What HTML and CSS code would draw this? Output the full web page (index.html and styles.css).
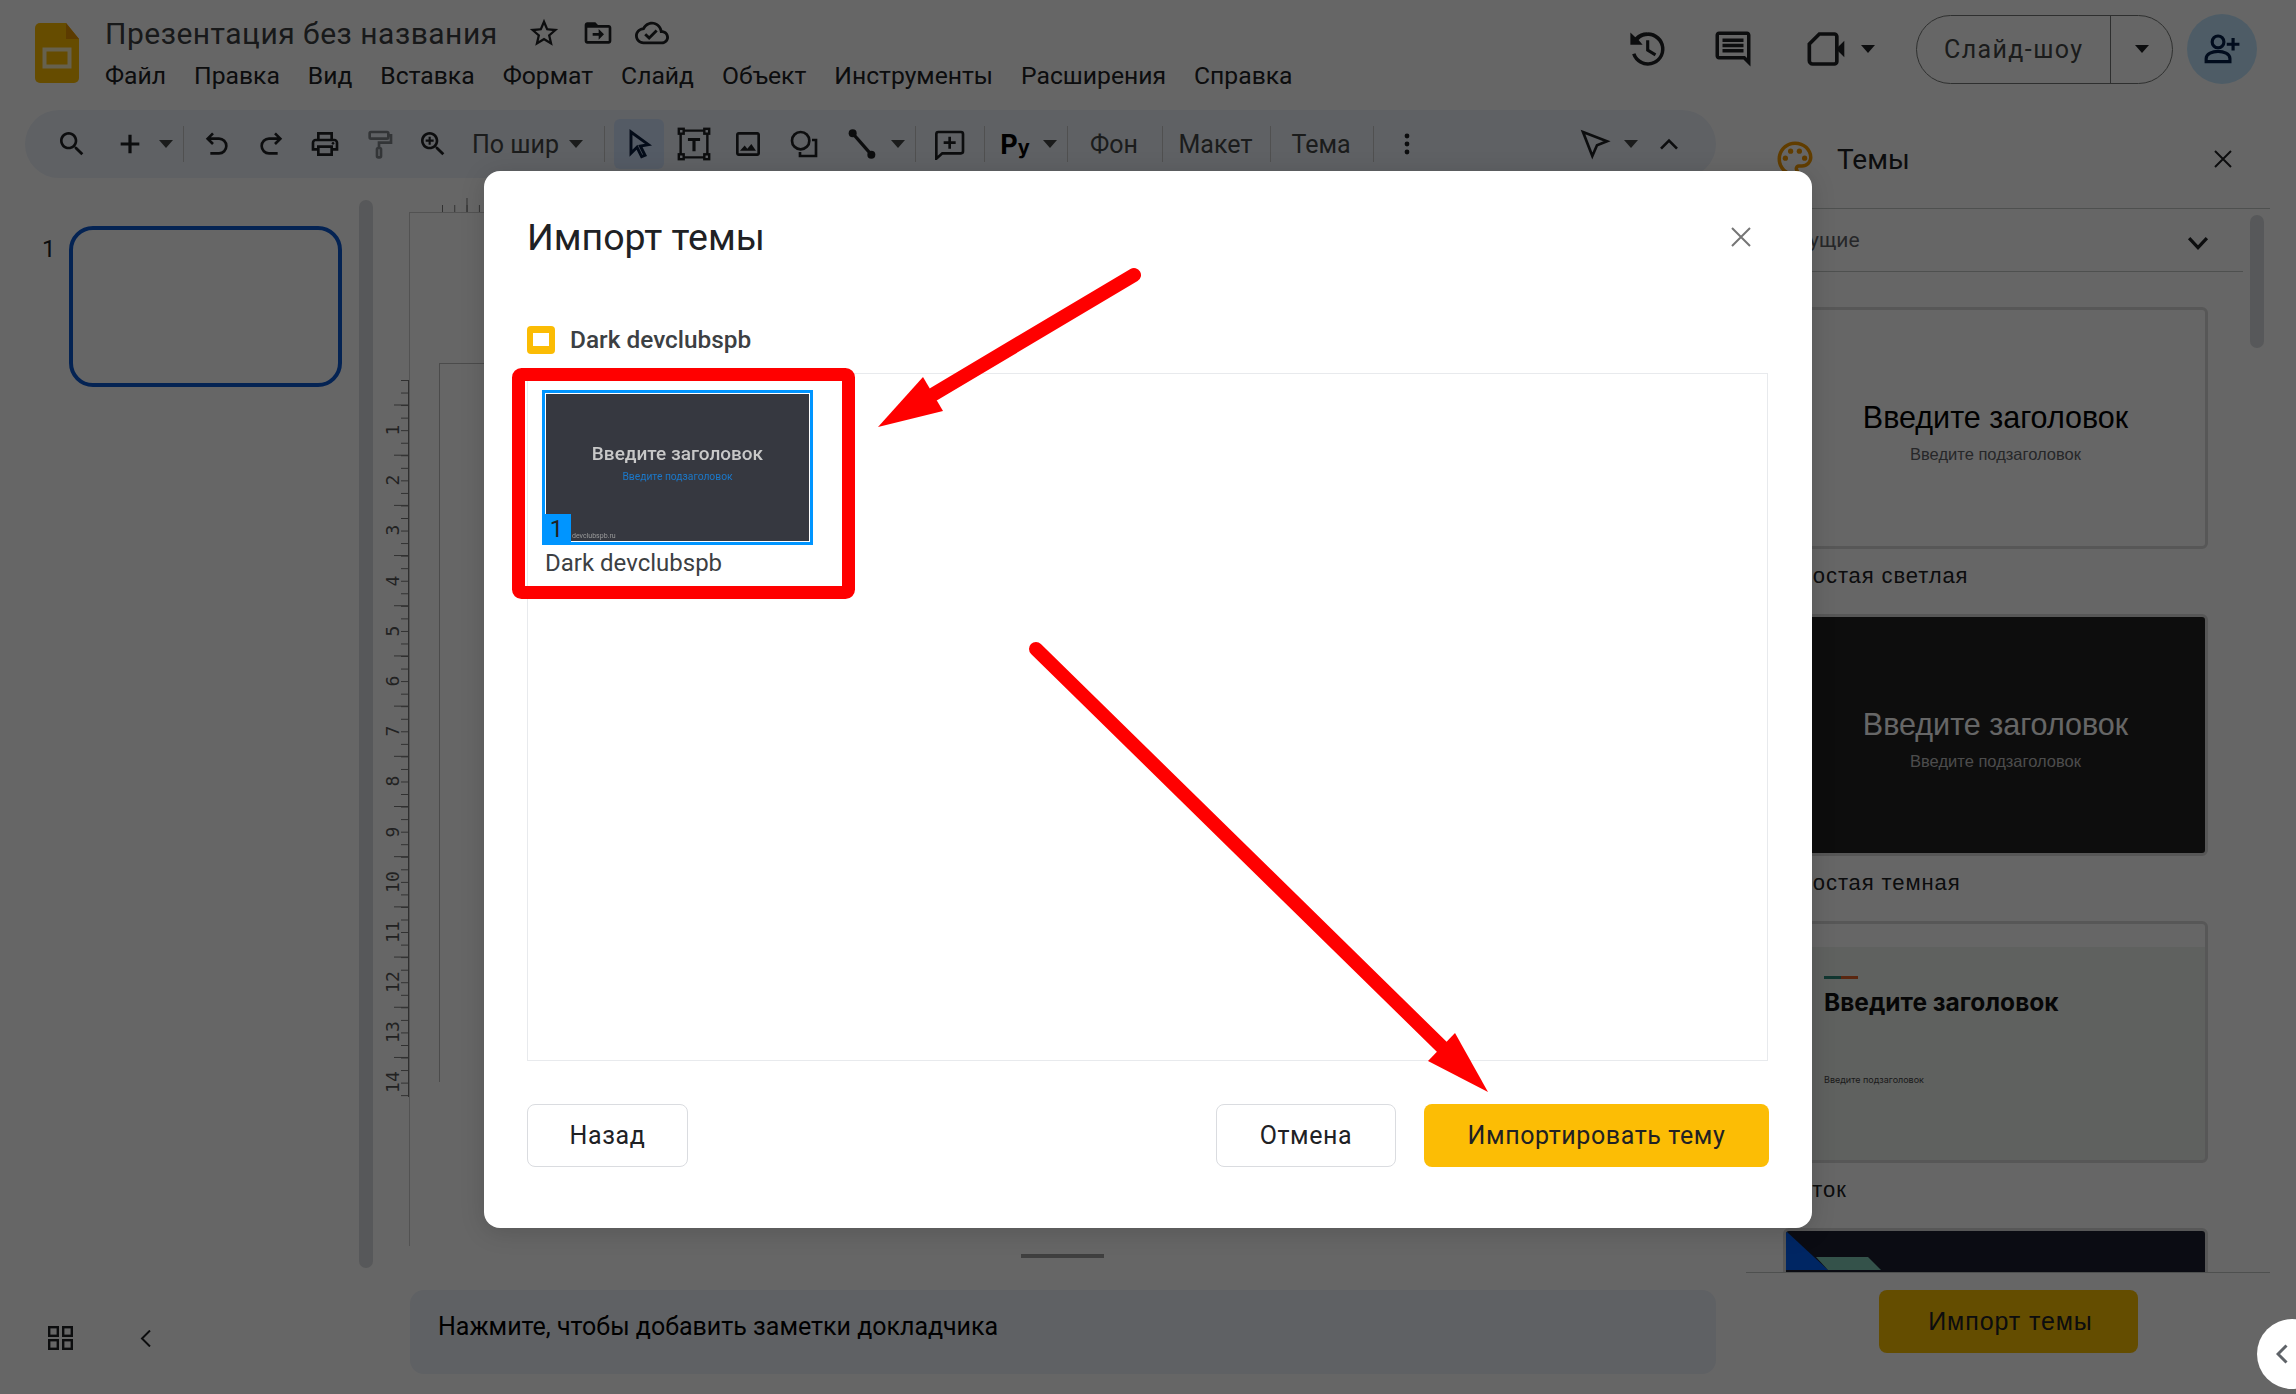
FILE: index.html
```html
<!DOCTYPE html>
<html lang="ru">
<head>
    <meta charset="UTF-8">
    <title>Презентация без названия</title>
    <link rel="stylesheet" href="styles.css">
</head>
<body>
<div class="app">
    <header class="topbar">
        <svg class="logo" viewBox="0 0 44 60">
            <path d="M5 0h26l13 16v39a5 5 0 0 1-5 5H5a5 5 0 0 1-5-5V5a5 5 0 0 1 5-5z" fill="#ffbd00"/>
            <path d="M31 0l13 16H31z" fill="#e69500"/>
            <rect x="9.5" y="26.5" width="25" height="17" fill="none" stroke="#fff3c4" stroke-width="4"/>
        </svg>
        <div class="doc-info">
            <div class="doc-title-row">
                <span class="doc-title">Презентация без названия</span>
                <svg class="ico title-star" viewBox="0 0 24 24"><path d="M22 9.24l-7.19-.62L12 2 9.19 8.63 2 9.24l5.46 4.73L5.82 21 12 17.27 18.18 21l-1.63-7.03L22 9.24zM12 15.4l-3.76 2.27 1-4.28-3.32-2.88 4.38-.38L12 6.1l1.71 4.04 4.38.38-3.32 2.88 1 4.28L12 15.4z"/></svg>
                <svg class="ico title-move" viewBox="0 0 24 24"><path d="M20 6h-8l-2-2H4c-1.1 0-2 .9-2 2v12c0 1.1.9 2 2 2h16c1.1 0 2-.9 2-2V8c0-1.1-.9-2-2-2zm0 12H4V8h16v10z"/><path d="M12.5 17l4-4-4-4v3H8v2h4.500z"/></svg>
                <svg class="ico title-cloud" viewBox="0 0 24 24"><path d="M19.350 10.040C18.670 6.590 15.640 4 12 4 9.110 4 6.600 5.640 5.350 8.040 2.340 8.360 0 10.910 0 14c0 3.310 2.690 6 6 6h13c2.760 0 5-2.240 5-5 0-2.640-2.050-4.780-4.650-4.960zM19 18H6c-2.210 0-4-1.790-4-4 0-2.050 1.530-3.760 3.560-3.970l1.070-.11.5-.95C8.080 7.140 9.940 6 12 6c2.620 0 4.880 1.860 5.390 4.430l.3 1.500 1.530.11c1.560.1 2.780 1.410 2.780 2.960 0 1.650-1.350 3-3 3zm-9-3.820l-2.090-2.090L6.500 13.500 10 17l6.010-6.010-1.410-1.410z"/></svg>
            </div>
            <nav class="menu">
                <span>Файл</span><span>Правка</span><span>Вид</span><span>Вставка</span><span>Формат</span><span>Слайд</span><span>Объект</span><span>Инструменты</span><span>Расширения</span><span>Справка</span>
            </nav>
        </div>
        <div class="top-actions">
            <svg class="ico top-ico" viewBox="0 0 24 24"><path d="M12.500 2.500a9.500 9.500 0 1 1-9 12.500l1.900-.6a7.500 7.500 0 1 0 1.800-7.600L9.500 9.500H2.500v-7l2.800 2.800a9.500 9.500 0 0 1 7.200-2.800z"/><path d="M11.500 7h1.800v5.200l4 2.400-.9 1.500-4.900-3z"/></svg>
            <svg class="ico top-ico comment-ico" viewBox="0 0 24 24"><path d="M21.990 4c0-1.100-.89-2-1.990-2H4c-1.100 0-2 .9-2 2v12c0 1.100.9 2 2 2h14l4 4-.01-18zM20 4v13.170L18.830 16H4V4h16zM6 12h12v2H6zm0-3h12v2H6zm0-3h12v2H6z"/></svg>
            <svg class="ico top-ico video-ico" viewBox="0 0 24 24"><path d="M2 9l6-6h9a1.500 1.500 0 0 1 1.500 1.500v15a1.500 1.500 0 0 1-1.500 1.500H4a2 2 0 0 1-2-2z" fill="none" stroke="#202124" stroke-width="2.200"/><path d="M18 12l5-5v10z"/></svg>
            <i class="caret video-caret"></i>
            <div class="show-pill">
                <span class="show-label">Слайд-шоу</span>
                <span class="show-drop"><i class="caret"></i></span>
            </div>
            <div class="share-btn">
                <svg class="ico" viewBox="0 0 24 24"><circle cx="9.500" cy="7.500" r="3.700" fill="none" stroke="#041e49" stroke-width="2"/><path d="M2 20v-2c0-3 4-4.500 7.500-4.500S17 15 17 18v2z" fill="none" stroke="#041e49" stroke-width="2"/><path d="M18 5v3h-3v2h3v3h2v-3h3V8h-3V5z" fill="#041e49"/></svg>
            </div>
        </div>
    </header>

    <div class="body-row">
        <div class="work">
            <div class="toolbar">
                <span class="tb-btn"><svg class="ico" viewBox="0 0 24 24"><path d="M15.500 14h-.79l-.28-.27C15.410 12.590 16 11.110 16 9.500 16 5.910 13.090 3 9.500 3S3 5.910 3 9.500 5.910 16 9.500 16c1.610 0 3.090-.59 4.230-1.570l.27.28v.79l5 4.990L20.490 19l-4.990-5zm-6 0C7.010 14 5 11.990 5 9.500S7.010 5 9.500 5 14 7.010 14 9.500 11.990 14 9.500 14z"/></svg></span>
                <span class="tb-btn plus-btn"><svg class="ico" viewBox="0 0 24 24"><path d="M19 13.200h-5.800V19h-2.400v-5.800H5v-2.400h5.800V5h2.400v5.800H19z"/></svg></span>
                <span class="tb-caret"><i class="caret small"></i></span>
                <i class="tb-sep"></i>
                <span class="tb-btn"><svg class="ico line-ico" viewBox="0 0 24 24"><path d="M9 4 5 8l4 4M5 8h8.500a5.500 5.500 0 0 1 0 11H7"/></svg></span>
                <span class="tb-btn"><svg class="ico line-ico" viewBox="0 0 24 24"><path d="M15 4l4 4-4 4M19 8h-8.500a5.500 5.500 0 0 0 0 11H17"/></svg></span>
                <span class="tb-btn"><svg class="ico" viewBox="0 0 24 24"><path d="M19 8h-1V3H6v5H5c-1.660 0-3 1.340-3 3v6h4v4h12v-4h4v-6c0-1.660-1.340-3-3-3zM8 5h8v3H8V5zm8 12v2H8v-4h8v2zm2-2v-2H6v2H4v-4c0-.55.45-1 1-1h14c.55 0 1 .45 1 1v4h-2z"/><circle cx="18" cy="11.500" r="1"/></svg></span>
                <span class="tb-btn"><svg class="ico line-ico paint-ico" viewBox="0 0 24 24"><rect x="5" y="3" width="14" height="5" rx="1"/><path d="M19 5.500h2v5.500h-9v4"/><rect x="10.500" y="15" width="3" height="7" rx="1"/></svg></span>
                <span class="tb-btn"><svg class="ico" viewBox="0 0 24 24"><path d="M15.500 14h-.79l-.28-.27C15.410 12.590 16 11.110 16 9.500 16 5.910 13.090 3 9.500 3S3 5.910 3 9.500 5.910 16 9.500 16c1.610 0 3.090-.59 4.230-1.570l.27.28v.79l5 4.990L20.490 19l-4.990-5zm-6 0C7.010 14 5 11.990 5 9.500S7.010 5 9.500 5 14 7.010 14 9.500 11.990 14 9.500 14z"/><path d="M12.500 10.300h-2.200v2.200H8.700v-2.200H6.500V8.700h2.200V6.500h1.600v2.200h2.200z"/></svg></span>
                <span class="tb-zoom">По шир<i class="caret small"></i></span>
                <i class="tb-sep"></i>
                <span class="tb-btn tb-active"><svg class="ico" viewBox="0 0 24 24"><path d="M6 3l13 9.500-6 1 3.500 7-2.500 1-3.500-7L6 19z" fill="none" stroke="#0b1f3f" stroke-width="2.200"/></svg></span>
                <span class="tb-btn"><svg class="ico textbox-ico" viewBox="0 0 28 28"><path d="M5 3h18M5 25h18M3 5v18M25 5v18" fill="none" stroke="#202124" stroke-width="2"/><g fill="none" stroke="#202124" stroke-width="2"><rect x="1.500" y="1.500" width="4" height="4"/><rect x="22.500" y="1.500" width="4" height="4"/><rect x="1.500" y="22.500" width="4" height="4"/><rect x="22.500" y="22.500" width="4" height="4"/></g><path d="M9 9h10v2.500h-3.700V20h-2.600v-8.500H9z"/></svg></span>
                <span class="tb-btn"><svg class="ico" viewBox="0 0 24 24"><path d="M19 5v14H5V5h14m0-2H5c-1.100 0-2 .9-2 2v14c0 1.100.9 2 2 2h14c1.100 0 2-.9 2-2V5c0-1.100-.9-2-2-2zm-4.500 9l-3 3.500-2-2.300L6 17h12z"/></svg></span>
                <span class="tb-btn shape-btn"><svg class="ico line-ico" viewBox="0 0 24 24"><circle cx="9.500" cy="9.500" r="6.500"/><path d="M18 9h3v12H9v-3"/></svg></span>
                <span class="tb-btn line-btn"><svg class="ico" viewBox="0 0 24 24"><path d="M4.500 3.500l15 17" stroke="#202124" stroke-width="2.400"/><circle cx="5" cy="4" r="3"/><circle cx="19" cy="20" r="3"/></svg></span>
                <span class="tb-caret"><i class="caret small"></i></span>
                <i class="tb-sep"></i>
                <span class="tb-btn"><svg class="ico" viewBox="0 0 24 24"><path d="M4 3h17a1.500 1.500 0 0 1 1.500 1.500v13a1.500 1.500 0 0 1-1.500 1.500H7l-4.500 4V4.500A1.500 1.500 0 0 1 4 3z" fill="none" stroke="#202124" stroke-width="2"/><path d="M11.500 6.500h2v3.500H17v2h-3.500v3.500h-2V12H8v-2h3.500z"/></svg></span>
                <i class="tb-sep"></i>
                <span class="tb-font"><b>P</b><b class="font-y">y</b></span>
                <span class="tb-caret font-caret"><i class="caret small"></i></span>
                <i class="tb-sep"></i>
                <span class="tb-text bg-btn">Фон</span>
                <i class="tb-sep"></i>
                <span class="tb-text layout-btn">Макет</span>
                <i class="tb-sep"></i>
                <span class="tb-text theme-btn">Тема</span>
                <i class="tb-sep"></i>
                <span class="tb-btn dots-btn"><svg class="ico" viewBox="0 0 24 24"><circle cx="12" cy="6" r="1.800"/><circle cx="12" cy="12" r="1.800"/><circle cx="12" cy="18" r="1.800"/></svg></span>
                <span class="tb-btn tb-push"><svg class="ico line-ico" viewBox="0 0 24 24"><path d="M3 3l18 7-7.500 3L10 21z"/></svg></span>
                <span class="tb-caret"><i class="caret small"></i></span>
                <span class="tb-btn chevron-btn"><svg class="ico line-ico" viewBox="0 0 24 24"><path d="M6 15.500l6-6 6 6"/></svg></span>
            </div>

            <div class="workspace">
                <aside class="filmstrip">
                    <div class="strip-top">
                        <div class="strip-list">
                            <span class="slide-num">1</span>
                            <div class="slide-thumb"></div>
                        </div>
                        <div class="strip-scroll"></div>
                    </div>
                    <div class="strip-foot">
                        <svg class="grid-ico" viewBox="0 0 25 24"><g fill="none" stroke="#202124" stroke-width="2.400"><rect x="1.200" y="1.200" width="8.600" height="8.600"/><rect x="15.200" y="1.200" width="8.600" height="8.600"/><rect x="1.200" y="14.200" width="8.600" height="8.600"/><rect x="15.200" y="14.200" width="8.600" height="8.600"/></g></svg>
                        <svg class="back-ico" viewBox="0 0 11 17"><path d="M10 .5 2 8.500l8 8" fill="none" stroke="#202124" stroke-width="2"/></svg>
                    </div>
                </aside>
                <div class="ruler-v">
                    <div class="ruler-nums">
                        <span>1</span><span>2</span><span>3</span><span>4</span><span>5</span><span>6</span><span>7</span><span>8</span><span>9</span><span>10</span><span>11</span><span>12</span><span>13</span><span>14</span>
                    </div>
                </div>
                <div class="canvas-col">
                    <div class="ruler-h"></div>
                    <div class="stage">
                        <div class="slide-frame"></div>
                    </div>
                    <div class="notes-handle"></div>
                    <div class="notes">Нажмите, чтобы добавить заметки докладчика</div>
                </div>
            </div>
        </div>

        <aside class="side">
            <div class="side-head">
                <svg class="palette" viewBox="0 0 24 24"><path d="M12 22C6.490 22 2 17.510 2 12S6.490 2 12 2s10 4.040 10 9c0 3.310-2.690 6-6 6h-1.770c-.28 0-.5.22-.5.5 0 .12.05.23.13.33.41.47.64 1.060.64 1.670 0 1.380-1.120 2.500-2.500 2.500zm0-18c-4.410 0-8 3.590-8 8s3.590 8 8 8c.28 0 .5-.22.5-.5 0-.16-.08-.28-.14-.35-.41-.46-.63-1.050-.63-1.650 0-1.380 1.120-2.500 2.500-2.500H16c2.210 0 4-1.790 4-4 0-3.860-3.590-7-8-7z"/><circle cx="6.500" cy="11.500" r="1.500"/><circle cx="9.500" cy="7.500" r="1.500"/><circle cx="14.500" cy="7.500" r="1.500"/><circle cx="17.500" cy="11.500" r="1.500"/></svg>
                <span class="side-title">Темы</span>
                <svg class="side-close" viewBox="0 0 18 18"><path d="M1 1l16 16M17 1 1 17" fill="none" stroke="#202124" stroke-width="2"/></svg>
            </div>
            <div class="theme-select">
                <span>Текущие</span>
                <svg class="select-chev" viewBox="0 0 16 11"><path d="M1.500 1.500 8 8.500l6.500-7" fill="none" stroke="#202124" stroke-width="2.400"/></svg>
            </div>
            <div class="side-scroll"></div>
            <div class="theme-list">
                <div class="theme-card">
                    <strong class="card-title">Введите заголовок</strong>
                    <span class="card-sub">Введите подзаголовок</span>
                </div>
                <div class="theme-name">Простая светлая</div>
                <div class="theme-card card-dark">
                    <strong class="card-title">Введите заголовок</strong>
                    <span class="card-sub">Введите подзаголовок</span>
                </div>
                <div class="theme-name">Простая темная</div>
                <div class="theme-card card-flow">
                    <i class="flow-bar"></i>
                    <strong class="card-title">Введите заголовок</strong>
                    <span class="card-sub">Введите подзаголовок</span>
                </div>
                <div class="theme-name">Поток</div>
                <div class="theme-card card-navy">
                    <svg class="navy-art" viewBox="0 0 120 39"><path d="M0 0 42 39H0z" fill="#0060f8"/><path d="M30 26h52l13 13H42z" fill="#82cdb9"/></svg>
                </div>
            </div>
            <div class="side-foot"><span class="side-import">Импорт темы</span></div>
        </aside>
    </div>

    <div class="scrim"></div>

    <section class="dialog">
        <div class="dialog-head">
            <h2>Импорт темы</h2>
            <svg class="dialog-close" viewBox="0 0 20 20"><path d="M1 1l18 18M19 1 1 19" fill="none" stroke="#757575" stroke-width="2"/></svg>
        </div>
        <div class="file-row">
            <svg class="file-ico" viewBox="0 0 28 28"><rect width="28" height="28" rx="4" fill="#fbbc04"/><rect x="6" y="7" width="16" height="13" fill="#fff"/></svg>
            <span>Dark devclubspb</span>
        </div>
        <div class="import-list">
            <div class="import-item">
                <div class="import-thumb">
                    <div class="thumb-slide">
                        <span class="thumb-title">Введите заголовок</span>
                        <span class="thumb-sub">Введите подзаголовок</span>
                        <span class="thumb-foot">devclubspb.ru</span>
                    </div>
                    <span class="thumb-badge">1</span>
                </div>
                <div class="import-name">Dark devclubspb</div>
            </div>
        </div>
        <div class="dialog-actions">
            <button class="btn">Назад</button>
            <button class="btn btn-cancel">Отмена</button>
            <button class="btn btn-yellow">Импортировать тему</button>
        </div>
    </section>

    <div class="float-toggle">
        <svg viewBox="0 0 12 20"><path d="M10.500 1.500 2 10l8.500 8.500" fill="none" stroke="#5f6368" stroke-width="3"/></svg>
    </div>

    <svg class="marks" viewBox="0 0 2296 1394">
        <rect x="518.500" y="374.500" width="330" height="218" rx="3" fill="none" stroke="#ff0000" stroke-width="13"/>
        <path d="M1134 275 934 394" stroke="#ff0000" stroke-width="14" stroke-linecap="round"/>
        <path d="M878 427 923 377 943 411z" fill="#ff0000"/>
        <path d="M1036 649 1443 1048" stroke="#ff0000" stroke-width="14" stroke-linecap="round"/>
        <path d="M1488 1092 1455 1033 1428 1061z" fill="#ff0000"/>
    </svg>
</div>
</body>
</html>
```

FILE: styles.css
```css
* {
    box-sizing: border-box;
}
html, body {
    margin: 0;
    padding: 0;
}
body {
    font-family: Roboto, "Liberation Sans", sans-serif;
    color: #202124;
    background: #fff;
}
.app {
    position: relative;
    width: 2296px;
    height: 1394px;
    overflow: hidden;
    background: #fff;
}
.ico {
    display: block;
    width: 32px;
    height: 32px;
    fill: #202124;
}
.line-ico {
    fill: none;
    stroke: #202124;
    stroke-width: 2;
}

/* top bar */
.topbar {
    display: flex;
    height: 110px;
}
.logo {
    width: 44px;
    height: 60px;
    margin: 23px 26px 0 35px;
    flex: none;
}
.doc-info {
    padding-top: 15px;
}
.doc-title-row {
    display: flex;
    align-items: center;
    height: 36px;
}
.doc-title {
    font-size: 30px;
    letter-spacing: .5px;
    color: #3c4043;
    width: 422px;
    white-space: nowrap;
}
.title-star {
    width: 34px;
    height: 34px;
}
.title-move {
    width: 32px;
    height: 32px;
    margin-left: 21px;
}
.title-cloud {
    width: 34px;
    height: 34px;
    margin-left: 21px;
}
.menu {
    display: flex;
    gap: 28px;
    margin-top: 10px;
    font-size: 24.700px;
    line-height: 30px;
    color: #202124;
}
.top-actions {
    display: flex;
    align-items: center;
    margin-left: auto;
    padding: 14px 39px 0 0;
    height: 84px;
}
.top-ico {
    width: 42px;
    height: 42px;
    margin-right: 44px;
}
.comment-ico {
    margin-right: 52px;
}
.video-ico {
    width: 40px;
    height: 40px;
    margin-right: 15px;
}
.caret {
    display: block;
    width: 0;
    height: 0;
    border: 7px solid transparent;
    border-top: 8px solid #202124;
    border-bottom: 0;
}
.caret.small {
    border-top-color: #444746;
}
.video-caret {
    margin-right: 41px;
}
.show-pill {
    display: flex;
    width: 257px;
    height: 69px;
    margin-right: 14px;
    border: 1px solid #747775;
    border-radius: 35px;
}
.show-label {
    width: 193px;
    padding-left: 27px;
    font-size: 25px;
    line-height: 67px;
    letter-spacing: 1.400px;
    color: #444746;
}
.show-drop {
    flex: 1;
    display: flex;
    align-items: center;
    justify-content: center;
    border-left: 1px solid #747775;
}
.share-btn {
    display: flex;
    align-items: center;
    justify-content: center;
    width: 70px;
    height: 70px;
    border-radius: 50%;
    background: #c2e7ff;
}
.share-btn .ico {
    width: 38px;
    height: 38px;
}

/* main area */
.body-row {
    display: flex;
    height: 1284px;
}
.work {
    width: 1716px;
    display: flex;
    flex-direction: column;
}
.toolbar {
    display: flex;
    align-items: center;
    height: 68px;
    margin-left: 25px;
    padding: 0 20px;
    background: #edf2fa;
    border-radius: 34px;
}
.tb-btn {
    display: flex;
    align-items: center;
    justify-content: center;
    width: 54px;
    height: 50px;
    flex: none;
}
.plus-btn {
    margin-left: 4px;
}
.tb-caret {
    display: flex;
    justify-content: center;
    width: 18px;
    flex: none;
}
.tb-sep {
    width: 1px;
    height: 36px;
    margin: 0 6px 0 8px;
    background: #c7c7c7;
    flex: none;
}
.paint-ico {
    stroke: #80868b;
}
.tb-zoom {
    display: flex;
    align-items: center;
    gap: 10px;
    width: 136px;
    padding-left: 12px;
    font-size: 25px;
    color: #444746;
    white-space: nowrap;
}
.tb-active {
    width: 50px;
    margin: 0 3px;
    background: #d3e3fd;
    border-radius: 6px;
}
.textbox-ico {
    width: 34px;
    height: 34px;
}
.shape-btn {
    margin: 0 2px;
}
.line-btn {
    margin-left: 2px;
}
.tb-font {
    width: 48px;
    text-align: center;
    font-family: "Inter", sans-serif;
    font-size: 27px;
    color: #000;
}
.font-y {
    font-size: 20px;
}
.font-caret {
    margin-left: 2px;
}
.tb-text {
    text-align: center;
    font-size: 25px;
    color: #444746;
}
.bg-btn {
    width: 80px;
}
.layout-btn {
    width: 93px;
}
.theme-btn {
    width: 88px;
}
.tb-push {
    margin-left: auto;
}
.chevron-btn {
    margin-left: 2px;
}

.workspace {
    flex: 1;
    display: flex;
    min-height: 0;
}
.filmstrip {
    width: 373px;
    flex: none;
}
.strip-top {
    display: flex;
    height: 1090px;
}
.strip-list {
    width: 359px;
    display: flex;
    padding: 48px 0 0 42px;
}
.slide-num {
    width: 27px;
    font-size: 24px;
    line-height: 26px;
    margin-top: 10px;
    color: #202124;
}
.slide-thumb {
    width: 273px;
    height: 161px;
    border: 4px solid #0b57d0;
    border-radius: 24px;
    background: #fff;
}
.strip-scroll {
    width: 14px;
    margin-top: 22px;
    border-radius: 7px;
    background: #dadce0;
}
.strip-foot {
    display: flex;
    padding: 58px 0 0 48px;
}
.grid-ico {
    width: 25px;
    height: 24px;
}
.back-ico {
    width: 11px;
    height: 17px;
    margin: 4px 0 0 67px;
}
.ruler-v {
    width: 36px;
    height: 919px;
    padding-top: 202px;
    flex: none;
}
.ruler-nums {
    display: flex;
    flex-direction: column;
    height: 717px;
    padding-top: 25px;
    border-right: 1px solid #777;
    background:
        linear-gradient(#777 0 1px, transparent 1px) right 0 top 0 / 7px 12.550px repeat-y,
        linear-gradient(#777 0 1px, transparent 1px) right 0 top 24.500px / 14px 50.200px repeat-y;
}
.ruler-nums span {
    display: flex;
    align-items: center;
    justify-content: center;
    flex: none;
    width: 30px;
    height: 50.200px;
    margin-left: 4px;
    font-family: "DejaVu Sans Mono", monospace;
    font-size: 18px;
    color: #555;
    transform: rotate(-90deg);
}
.canvas-col {
    flex: 1;
    min-width: 0;
}
.ruler-h {
    height: 34px;
    margin-left: 33px;
    background:
        linear-gradient(90deg, #777 0 1px, transparent 1px) 0 bottom / 12.300px 7px repeat-x,
        linear-gradient(90deg, #777 0 1px, transparent 1px) 24.500px bottom / 49.200px 14px repeat-x;
}
.stage {
    height: 1034px;
    border-top: 1px solid #ccc;
    border-left: 1px solid #ccc;
    padding: 150px 0 0 29px;
}
.slide-frame {
    height: 719px;
    border: 1px solid #bbb;
    border-bottom: 0;
}
.notes-handle {
    width: 83px;
    height: 4px;
    margin: 8px auto 0;
    background: #9e9e9e;
}
.notes {
    height: 84px;
    margin: 32px 0 0 1px;
    padding: 22px 28px;
    font-size: 25px;
    line-height: 30px;
    background: #edf2fa;
    border-radius: 14px;
    color: #000;
}

/* themes side panel */
.side {
    position: relative;
    display: flex;
    flex-direction: column;
    width: 524px;
    margin-left: 30px;
    border-radius: 30px 30px 0 0;
}
.side-head {
    display: flex;
    align-items: center;
    height: 99px;
    padding: 0 38px 0 28px;
    border-bottom: 1px solid #c4c7c5;
}
.palette {
    width: 42px;
    height: 42px;
    fill: #f29900;
}
.side-title {
    margin-left: 21px;
    font-size: 28px;
    color: #202124;
}
.side-close {
    width: 18px;
    height: 18px;
    margin-left: auto;
}
.theme-select {
    display: flex;
    align-items: center;
    justify-content: space-between;
    height: 63px;
    width: 497px;
    padding: 0 34px 0 29px;
    border-bottom: 1px solid #c4c7c5;
    font-size: 21px;
    color: #5f6368;
}
.select-chev {
    width: 22px;
    height: 15px;
    margin-top: 6px;
}
.side-scroll {
    position: absolute;
    left: 504px;
    top: 105px;
    width: 14px;
    height: 133px;
    border-radius: 7px;
    background: #dadce0;
}
.theme-list {
    flex: 1;
    min-height: 0;
    overflow: hidden;
    padding: 35px 0 0 37px;
}
.theme-card {
    display: flex;
    flex-direction: column;
    align-items: center;
    width: 425px;
    height: 242px;
    padding-top: 90px;
    border: 3px solid #d9d9d9;
    border-radius: 6px;
    background: #fff;
    font-family: "Liberation Sans", sans-serif;
}
.card-title {
    font-size: 30.500px;
    font-weight: 400;
    line-height: 34px;
    color: #000;
}
.card-sub {
    margin-top: 10px;
    font-size: 16.500px;
    line-height: 20px;
    color: #5f6368;
}
.card-dark {
    background: #212121;
}
.card-dark .card-title {
    color: #fff;
}
.card-dark .card-sub {
    color: #bdbdbd;
}
.theme-name {
    height: 65px;
    padding-top: 14px;
    font-family: "Liberation Sans", sans-serif;
    font-size: 22px;
    line-height: 26px;
    letter-spacing: .9px;
    color: #202124;
}
.card-flow {
    align-items: flex-start;
    padding: 52px 0 0 38px;
    background: linear-gradient(#fff 0 23px, #eef2ee 23px);
    font-family: Inter, sans-serif;
}
.flow-bar {
    width: 34px;
    height: 3px;
    background: linear-gradient(90deg, #2e8b7a 50%, #e0622a 50%);
}
.card-flow .card-title {
    margin-top: 6px;
    font-size: 24.500px;
    font-weight: 700;
    color: #111;
}
.card-flow .card-sub {
    margin-top: 51px;
    font-size: 9px;
    color: #444;
}
.card-navy {
    padding: 0;
    background: #1c2030;
    overflow: hidden;
}
.navy-art {
    display: block;
    align-self: flex-start;
    width: 120px;
    height: 39px;
}
.side-foot {
    position: relative;
    display: flex;
    justify-content: center;
    height: 122px;
    padding-top: 17px;
    border-top: 1px solid #c4c7c5;
    background: #fff;
}
.side-import {
    width: 259px;
    height: 63px;
    padding-left: 5px;
    border-radius: 8px;
    background: #fbc002;
    font-family: "Liberation Sans", sans-serif;
    font-size: 25px;
    line-height: 63px;
    letter-spacing: .9px;
    text-align: center;
    color: #202124;
}

/* modal */
.scrim {
    position: absolute;
    inset: 0;
    background: rgba(0, 0, 0, .6);
}
.dialog {
    position: absolute;
    left: 484px;
    top: 171px;
    width: 1328px;
    height: 1057px;
    padding: 46px 43px 0;
    background: #fff;
    border-radius: 16px;
    box-shadow: 0 4px 24px rgba(0, 0, 0, .15);
}
.dialog-head {
    display: flex;
    align-items: center;
    justify-content: space-between;
    height: 40px;
}
.dialog-head h2 {
    margin: 0;
    font-size: 37.500px;
    font-weight: 400;
    color: #202124;
}
.dialog-close {
    width: 20px;
    height: 20px;
    margin-right: 18px;
}
.file-row {
    display: flex;
    align-items: center;
    gap: 15px;
    height: 28px;
    margin-top: 69px;
    font-size: 24.400px;
    font-weight: 500;
    color: #3c4043;
}
.file-row span {
    margin-top: -2px;
}
.file-ico {
    width: 28px;
    height: 28px;
}
.import-list {
    width: 1241px;
    height: 688px;
    margin-top: 19px;
    padding: 16px 14px;
    border: 1px solid #e8eaed;
}
.import-item {
    width: 271px;
}
.import-thumb {
    position: relative;
    height: 155px;
    padding: 1px;
    border: 3px solid #0095ff;
    background: #fff;
}
.thumb-slide {
    display: flex;
    flex-direction: column;
    align-items: center;
    position: relative;
    height: 100%;
    padding-top: 48px;
    background: #363840;
}
.thumb-title {
    font-size: 19px;
    font-weight: 500;
    line-height: 24px;
    color: #c8c8c8;
    filter: blur(.6px);
}
.thumb-sub {
    margin-top: 4px;
    font-size: 10.300px;
    line-height: 14px;
    color: #1b78c9;
    filter: blur(.6px);
}
.thumb-foot {
    position: absolute;
    left: 26px;
    bottom: 1px;
    font-size: 7px;
    color: #9a9a9a;
    filter: blur(.3px);
}
.thumb-badge {
    position: absolute;
    left: -3px;
    bottom: -2px;
    width: 29px;
    height: 30px;
    background: #0095ff;
    font-size: 24px;
    line-height: 30px;
    text-align: center;
    color: #202124;
}
.import-name {
    margin: 2px 0 0 3px;
    font-size: 24px;
    line-height: 32px;
    color: #3c4043;
}
.dialog-actions {
    display: flex;
    width: 1242px;
    margin-top: 43px;
}
.btn {
    width: 161px;
    height: 63px;
    border: 1px solid #dadce0;
    border-radius: 8px;
    background: #fff;
    font-family: Roboto, sans-serif;
    font-size: 25px;
    letter-spacing: .6px;
    color: #202124;
}
.btn-cancel {
    width: 180px;
    margin: 0 28px 0 auto;
}
.btn-yellow {
    width: 345px;
    border: 0;
    background: #fcbd05;
}
.float-toggle {
    position: absolute;
    left: 2257px;
    top: 1319px;
    display: flex;
    align-items: center;
    width: 70px;
    height: 70px;
    padding-left: 19px;
    border-radius: 50%;
    background: #fff;
}
.float-toggle svg {
    width: 12px;
    height: 20px;
}
.marks {
    position: absolute;
    inset: 0;
    width: 2296px;
    height: 1394px;
    pointer-events: none;
}
```
